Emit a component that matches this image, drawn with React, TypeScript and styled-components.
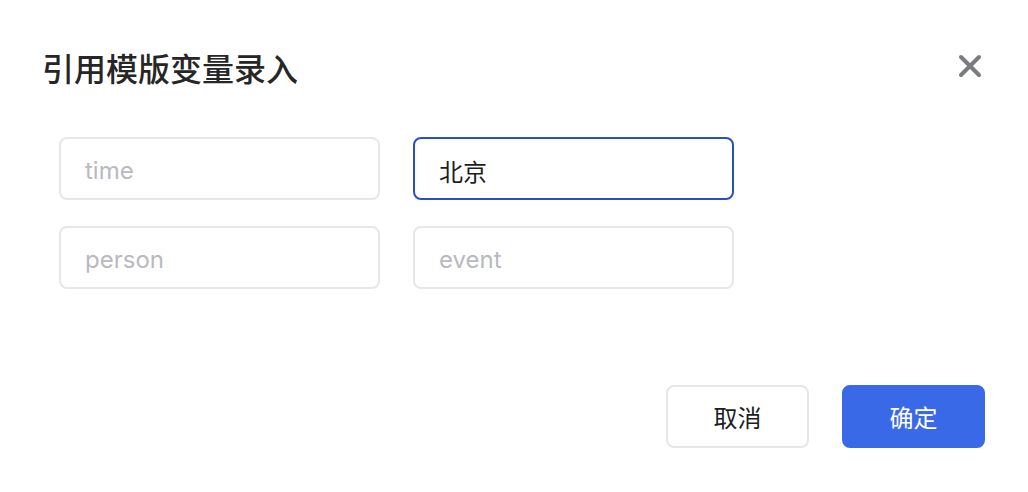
import React from 'react';
import styled, { createGlobalStyle } from 'styled-components';

const GlobalStyle = createGlobalStyle`
  html, body {
    margin: 0;
    padding: 0;
    background: #ffffff;
  }
  body {
    font-family: Inter, "Noto Sans CJK SC", sans-serif;
  }
  * {
    box-sizing: border-box;
  }
`;

const Modal = styled.div`
  width: 1028px;
  height: 492px;
  padding: 46px 43px 44px 42px;
  display: flex;
  flex-direction: column;
  background: #fff;
`;

const Header = styled.div`
  display: flex;
  justify-content: space-between;
  align-items: center;
  height: 42px;
`;

const Title = styled.h1`
  margin: 0;
  font-family: "Noto Sans CJK SC", sans-serif;
  font-size: 32px;
  font-weight: 500;
  line-height: 42px;
  color: #262626;
`;

const CloseButton = styled.button`
  width: 32px;
  height: 32px;
  padding: 0;
  margin: -2px -1px 0 0;
  border: none;
  background: transparent;
  display: flex;
  align-items: center;
  justify-content: center;
  cursor: pointer;
`;

const Fields = styled.div`
  display: grid;
  grid-template-columns: 321px 321px;
  column-gap: 33px;
  row-gap: 26px;
  margin: 49px 0 0 17px;
`;

const Field = styled.input<{ $active?: boolean }>`
  width: 100%;
  height: 63px;
  padding: 3px 24px 0;
  border: 2px solid ${({ $active }) => ($active ? '#2a4fc4' : '#e7e7e9')};
  border-radius: 8px;
  outline: none;
  font-family: Inter, "Noto Sans CJK SC", sans-serif;
  font-size: 24px;
  color: #1d1d1f;
  background: #fff;

  &::placeholder {
    color: #b9b9c0;
  }
`;

const Footer = styled.div`
  margin-top: auto;
  display: flex;
  justify-content: flex-end;
  gap: 33px;
`;

const Button = styled.button<{ $primary?: boolean }>`
  width: 143px;
  height: 63px;
  border-radius: 8px;
  border: 2px solid ${({ $primary }) => ($primary ? '#3a69e8' : '#e7e7e9')};
  background: ${({ $primary }) => ($primary ? '#3a69e8' : '#ffffff')};
  color: ${({ $primary }) => ($primary ? '#ffffff' : '#1d1d1f')};
  font-family: "Noto Sans CJK SC", sans-serif;
  font-size: 24px;
  cursor: pointer;
`;

const CloseIcon = () => (
  <svg width="24" height="24" viewBox="0 0 24 24" fill="none">
    <path d="M3 3L21 21M21 3L3 21" stroke="#7b7b82" strokeWidth="4" strokeLinecap="round" />
  </svg>
);

const App = () => {
  return (
    <>
      <GlobalStyle />
      <Modal>
        <Header>
          <Title>引用模版变量录入</Title>
          <CloseButton aria-label="关闭">
            <CloseIcon />
          </CloseButton>
        </Header>
        <Fields>
          <Field placeholder="time" />
          <Field $active defaultValue="北京" />
          <Field placeholder="person" />
          <Field placeholder="event" />
        </Fields>
        <Footer>
          <Button>取消</Button>
          <Button $primary>确定</Button>
        </Footer>
      </Modal>
    </>
  );
};

export default App;
